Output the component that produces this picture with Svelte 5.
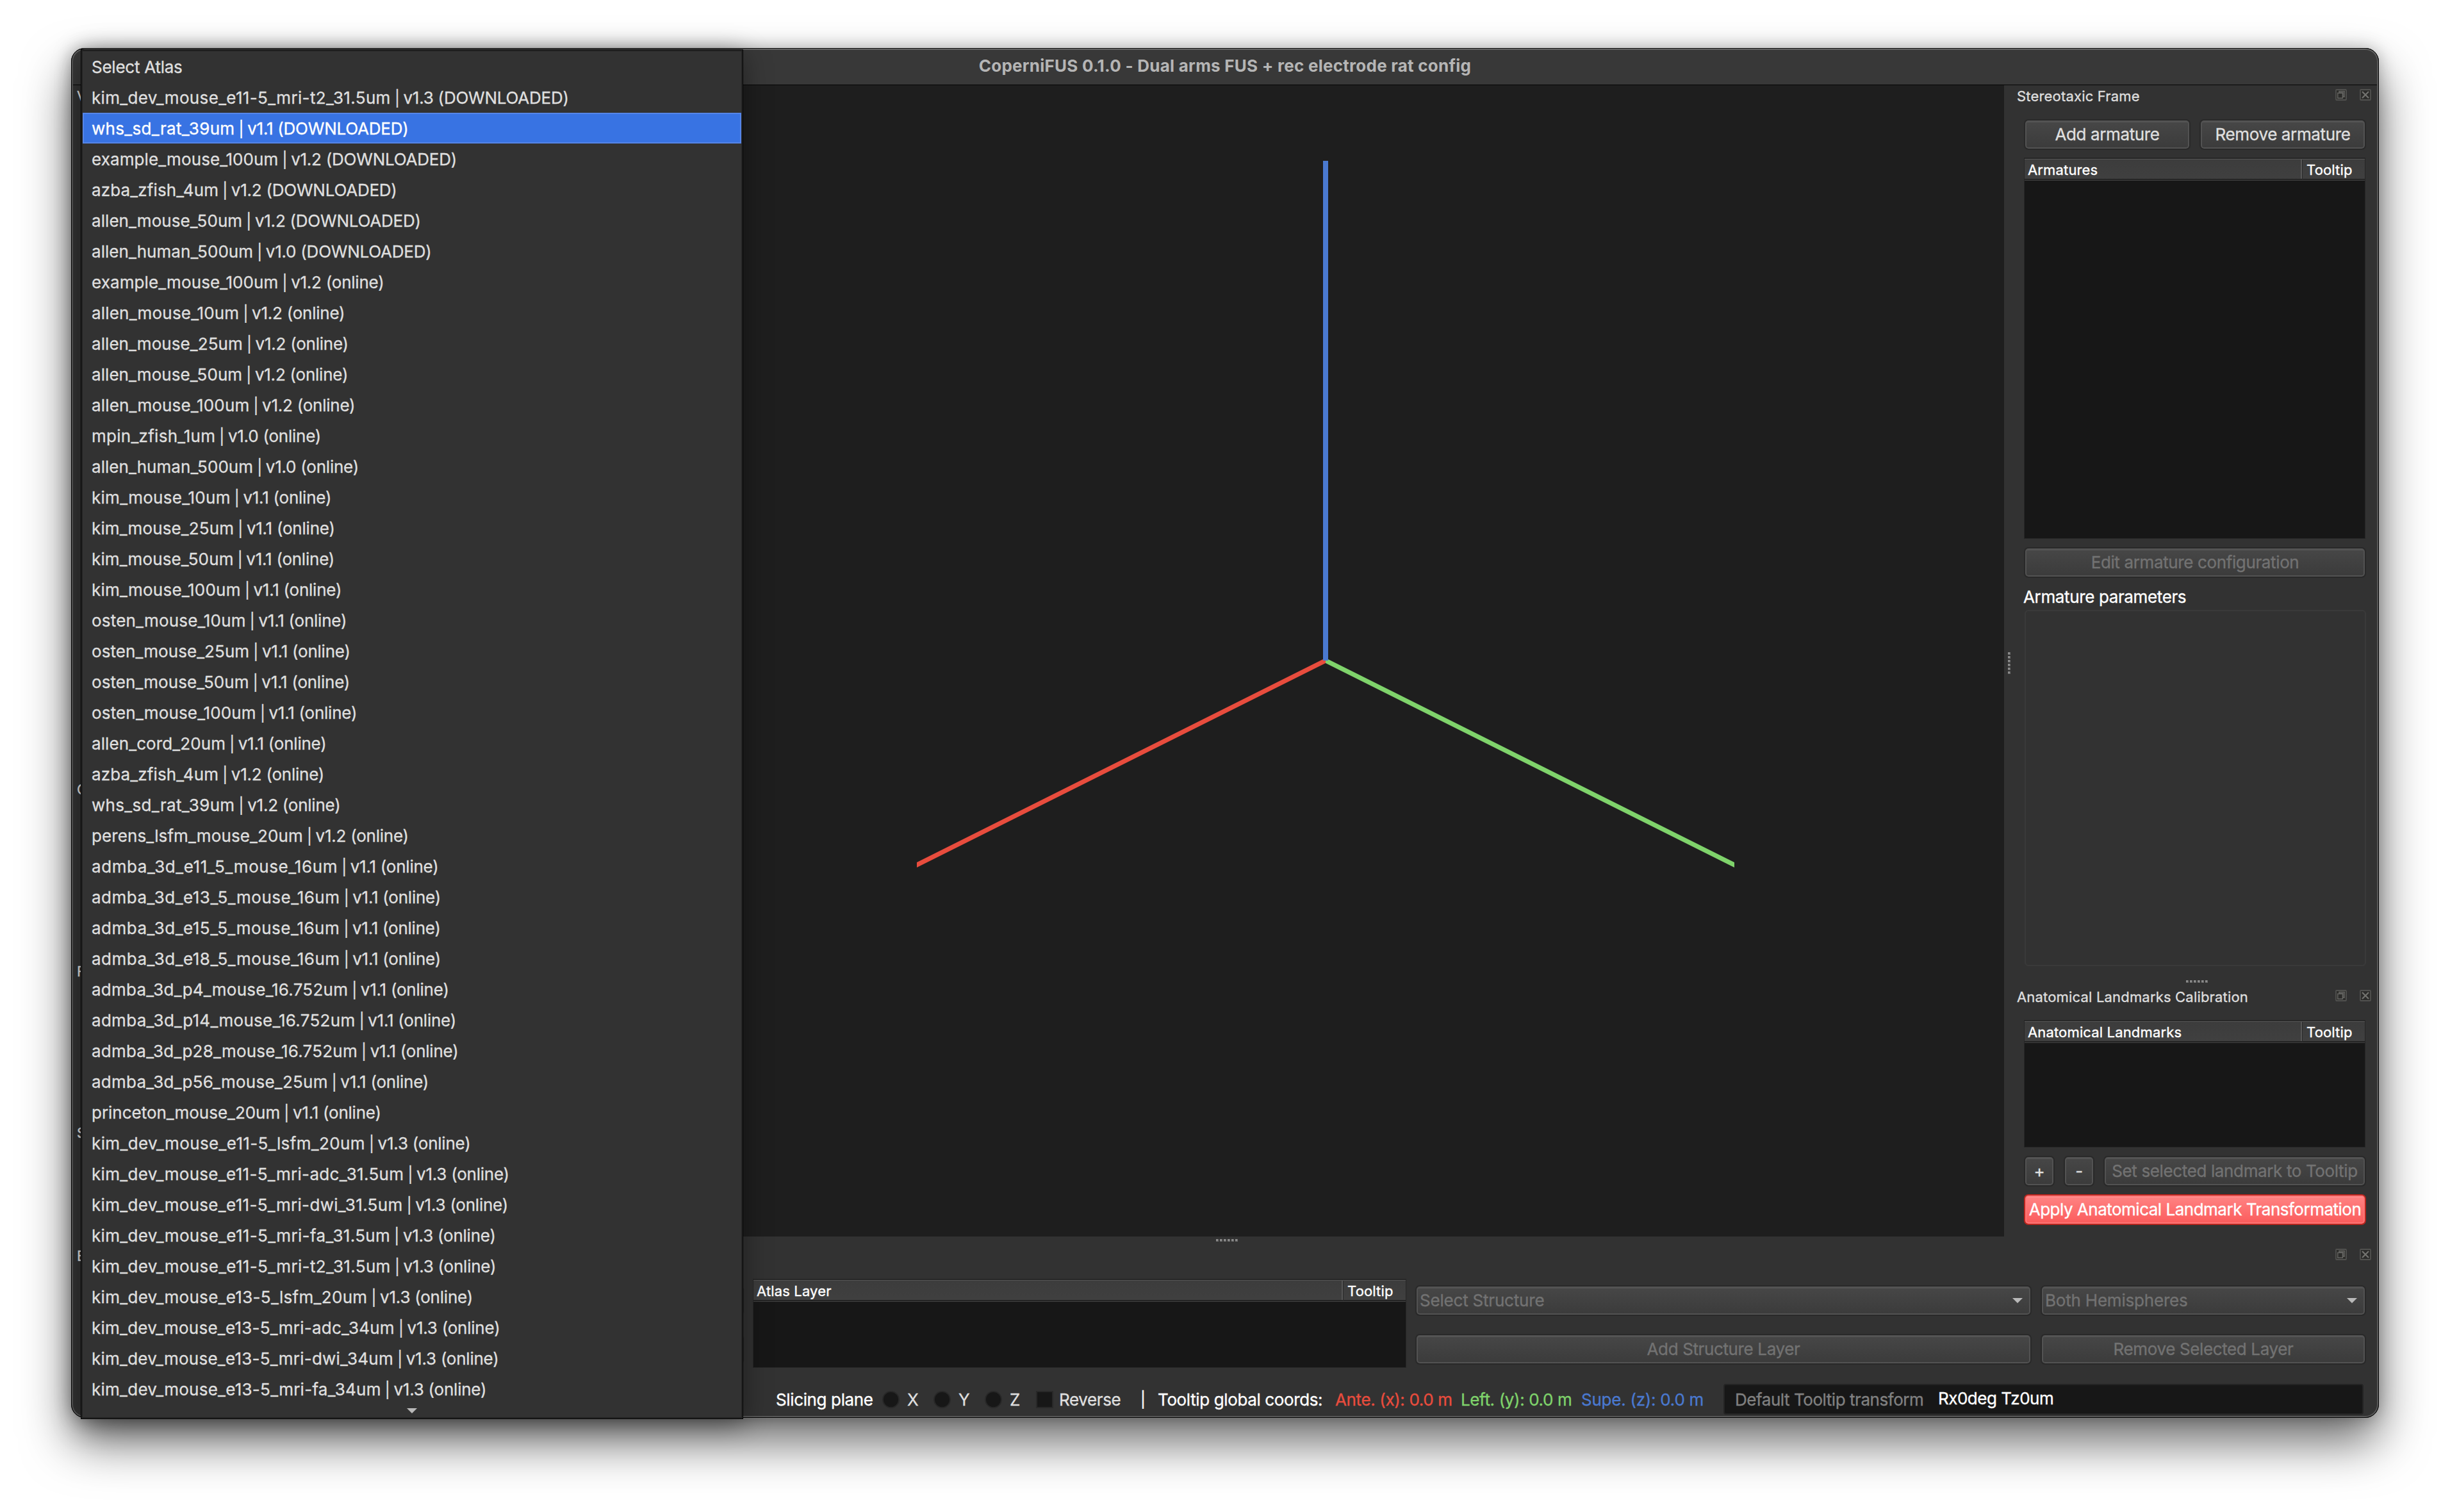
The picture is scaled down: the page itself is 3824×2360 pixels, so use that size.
<script lang="ts">
	const names = [
		'Select Atlas',
		'kim_dev_mouse_e11-5_mri-t2_31.5um | v1.3 (DOWNLOADED)',
		'whs_sd_rat_39um | v1.1 (DOWNLOADED)',
		'example_mouse_100um | v1.2 (DOWNLOADED)',
		'azba_zfish_4um | v1.2 (DOWNLOADED)',
		'allen_mouse_50um | v1.2 (DOWNLOADED)',
		'allen_human_500um | v1.0 (DOWNLOADED)',
		'example_mouse_100um | v1.2 (online)',
		'allen_mouse_10um | v1.2 (online)',
		'allen_mouse_25um | v1.2 (online)',
		'allen_mouse_50um | v1.2 (online)',
		'allen_mouse_100um | v1.2 (online)',
		'mpin_zfish_1um | v1.0 (online)',
		'allen_human_500um | v1.0 (online)',
		'kim_mouse_10um | v1.1 (online)',
		'kim_mouse_25um | v1.1 (online)',
		'kim_mouse_50um | v1.1 (online)',
		'kim_mouse_100um | v1.1 (online)',
		'osten_mouse_10um | v1.1 (online)',
		'osten_mouse_25um | v1.1 (online)',
		'osten_mouse_50um | v1.1 (online)',
		'osten_mouse_100um | v1.1 (online)',
		'allen_cord_20um | v1.1 (online)',
		'azba_zfish_4um | v1.2 (online)',
		'whs_sd_rat_39um | v1.2 (online)',
		'perens_lsfm_mouse_20um | v1.2 (online)',
		'admba_3d_e11_5_mouse_16um | v1.1 (online)',
		'admba_3d_e13_5_mouse_16um | v1.1 (online)',
		'admba_3d_e15_5_mouse_16um | v1.1 (online)',
		'admba_3d_e18_5_mouse_16um | v1.1 (online)',
		'admba_3d_p4_mouse_16.752um | v1.1 (online)',
		'admba_3d_p14_mouse_16.752um | v1.1 (online)',
		'admba_3d_p28_mouse_16.752um | v1.1 (online)',
		'admba_3d_p56_mouse_25um | v1.1 (online)',
		'princeton_mouse_20um | v1.1 (online)',
		'kim_dev_mouse_e11-5_lsfm_20um | v1.3 (online)',
		'kim_dev_mouse_e11-5_mri-adc_31.5um | v1.3 (online)',
		'kim_dev_mouse_e11-5_mri-dwi_31.5um | v1.3 (online)',
		'kim_dev_mouse_e11-5_mri-fa_31.5um | v1.3 (online)',
		'kim_dev_mouse_e11-5_mri-t2_31.5um | v1.3 (online)',
		'kim_dev_mouse_e13-5_lsfm_20um | v1.3 (online)',
		'kim_dev_mouse_e13-5_mri-adc_34um | v1.3 (online)',
		'kim_dev_mouse_e13-5_mri-dwi_34um | v1.3 (online)',
		'kim_dev_mouse_e13-5_mri-fa_34um | v1.3 (online)'
	];

	const count = (text: string, char: string) => text.split(char).length - 1;

	// Inter's underscore and 1 are narrow, so names with many of them get looser tracking
	const atlases = names.map((label) => {
		const [name, version] = label.split(' | ');
		const extra = 3.5 * count(name, '_') + 2 * count(name, '1');
		return { name, version, spacing: (extra / name.length - (version ? 0.37 : 0.25)).toFixed(3) };
	});

	const leftDocks = [
		{ title: 'V', height: 1082 },
		{ title: 'C', height: 284 },
		{ title: 'F', height: 252 },
		{ title: 'S', height: 179 }
	];

	let selected = $state(2);
</script>

{#snippet dockHead(title: string)}
	<div class="dock-head">
		<span class="dock-title">{title}</span>
		<svg class="dock-icon" viewBox="0 0 18 18">
			<rect class="frame" x="1" y="1" width="16" height="16" rx="1" />
			<path d="M6 5.5V3.5H14.2V12H12.5M6 5.5H12.2V13" />
			<path d="M3.8 6.2H11.4V14.2H3.8Z" />
		</svg>
		<svg class="dock-icon" viewBox="0 0 18 18">
			<rect class="frame" x="1" y="1" width="16" height="16" rx="1" />
			<path class="cross" d="M4 4L14 14M14 4L4 14" />
		</svg>
	</div>
{/snippet}

{#snippet tree(title: string)}
	<div class="tree">
		<div class="tree-head">
			<span class="col">{title}</span>
			<span class="col-last">Tooltip</span>
		</div>
	</div>
{/snippet}

{#snippet grip()}
	{#each Array(6) as _}
		<i></i>
	{/each}
{/snippet}

<div class="desktop">
	<div class="window">
		<header class="titlebar">CoperniFUS 0.1.0 - Dual arms FUS + rec electrode rat config</header>

		<main class="workspace">
			<aside class="left">
				{#each leftDocks as dock}
					<section style="height: {dock.height}px">
						<div class="dock-head"><span class="dock-title">{dock.title}</span></div>
					</section>
				{/each}
			</aside>

			<div class="viewport">
				<svg viewBox="1000 133 2128 1797">
					<polygon fill="#e84c3d" points="1431,1346 2069,1027 2069,1035 1431,1354" />
					<polygon fill="#7fd36b" points="2707,1346 2069,1027 2069,1035 2707,1354" />
					<rect fill="#4a79d0" x="2065" y="251" width="8" height="780" />
				</svg>
			</div>

			<aside class="right">
				<div class="grip vertical">{@render grip()}</div>
				<section class="dock stereotaxic">
					{@render dockHead('Stereotaxic Frame')}
					<div class="content">
						<div class="row">
							<button class="wide">Add armature</button>
							<button class="wide">Remove armature</button>
						</div>
						{@render tree('Armatures')}
						<button disabled>Edit armature configuration</button>
						<div class="label">Armature parameters</div>
						<div class="group"></div>
					</div>
				</section>
				<div class="grip">{@render grip()}</div>
				<section class="dock landmarks">
					{@render dockHead('Anatomical Landmarks Calibration')}
					<div class="content">
						{@render tree('Anatomical Landmarks')}
						<div class="row">
							<button class="small">+</button>
							<button class="small">-</button>
							<button class="wide" disabled>Set selected landmark to Tooltip</button>
						</div>
						<button class="apply">Apply Anatomical Landmark Transformation</button>
					</div>
				</section>
			</aside>
		</main>

		<footer class="bottom">
			<div class="grip">{@render grip()}</div>
			{@render dockHead('E')}
			<div class="layers">
				<div class="stack">
					<button></button>
					<button></button>
				</div>
				{@render tree('Atlas Layer')}
				<div class="stack">
					<button class="combo" disabled>Select Structure <span class="arrow"></span></button>
					<button disabled>Add Structure Layer</button>
				</div>
				<div class="stack">
					<button class="combo" disabled>Both Hemispheres <span class="arrow"></span></button>
					<button disabled>Remove Selected Layer</button>
				</div>
			</div>
			<div class="status">
				<span class="slicing">Slicing plane</span>
				{#each ['X', 'Y', 'Z'] as axis}
					<span class="radio"><i></i>{axis}</span>
				{/each}
				<span class="check"><i></i>Reverse</span>
				<span class="bar">|</span>
				<span class="coords">Tooltip global coords:</span>
				<span class="ante">Ante. (x): 0.0 m</span>
				<span class="leftward">Left. (y): 0.0 m</span>
				<span class="supe">Supe. (z): 0.0 m</span>
				<div class="line-edit">
					<span class="hint">Default Tooltip transform</span>
					<span class="value">Rx0deg Tz0um</span>
				</div>
			</div>
		</footer>

		<div class="rim"></div>

		<div class="menu">
			{#each atlases as atlas, i}
				<div class="item" class:selected={i === selected}>
					<span style="letter-spacing: {atlas.spacing}px">{atlas.name}</span
					>{#if atlas.version}<span class="pipe">{' | '}</span><span class="version"
							>{atlas.version}</span
						>{/if}
				</div>
			{/each}
			<div class="more"><span class="arrow"></span></div>
		</div>
	</div>
</div>

<style>
	:global(body) {
		background: #fff;
	}

	.desktop,
	.desktop * {
		box-sizing: border-box;
	}

	.desktop {
		width: 3824px;
		height: 2360px;
		padding: 75px 0 0 111px;
		overflow: hidden;
		background: #fff;
	}

	.window {
		position: relative;
		display: flex;
		flex-direction: column;
		width: 3602px;
		height: 2138px;
		border-radius: 21px;
		background: #323232;
		color: #fff;
		font-family: Inter, 'Liberation Sans', sans-serif;
		font-size: 26px;
		letter-spacing: -0.37px;
		white-space: nowrap;
		-webkit-text-stroke: 0.35px;
		box-shadow:
			0 38px 76px rgba(0, 0, 0, 0.58),
			0 0 26px rgba(0, 0, 0, 0.26);
	}

	.rim {
		position: absolute;
		inset: 0;
		border-radius: 21px;
		border: 1px solid #000;
		box-shadow:
			inset 0 1px 0 #777,
			inset 0 0 0 2px #575757;
		pointer-events: none;
	}

	.titlebar {
		flex: none;
		height: 58px;
		line-height: 55px;
		border-bottom: 1px solid #050505;
		border-radius: 21px 21px 0 0;
		background: #383838;
		color: #b5b5b5;
		font-weight: 700;
		letter-spacing: 0.25px;
		text-align: center;
		-webkit-text-stroke: 0;
	}

	.workspace {
		flex: none;
		display: flex;
		height: 1797px;
	}

	.left {
		width: 889px;
	}

	.viewport {
		width: 2128px;
		background: #1e1e1e;
	}

	.viewport svg {
		display: block;
		width: 100%;
		height: 100%;
	}

	.right {
		position: relative;
		width: 585px;
	}

	.dock-head {
		display: flex;
		align-items: center;
		height: 30px;
		padding: 0 12px 0 20px;
	}

	.left .dock-head,
	.bottom .dock-head {
		padding-left: 9px;
	}

	.dock-title {
		flex: 1;
		position: relative;
		top: 2px;
		color: #dedede;
		font-size: 22px;
		letter-spacing: 0.18px;
	}

	.dock-icon {
		width: 18px;
		height: 18px;
		margin-left: 20px;
		fill: none;
		stroke: #656562;
		stroke-width: 1.4;
	}

	.dock-icon .frame {
		fill: #2c2c2a;
		stroke: #51514f;
		stroke-width: 1.8;
	}

	.dock-icon .cross {
		stroke: #73736f;
		stroke-width: 2.2;
	}

	.content {
		display: flex;
		flex-direction: column;
		padding: 23px 20px 0 31px;
	}

	.row {
		display: flex;
		gap: 14px;
	}

	button {
		display: block;
		height: 48px;
		padding: 0;
		border: 2px solid #292929;
		border-radius: 7px;
		background: linear-gradient(#474747, #3b3b3b);
		box-shadow:
			inset 0 0 0 2px #525252,
			inset 0 3px 0 #575757;
		color: #dfdfdf;
		font: inherit;
		letter-spacing: inherit;
		line-height: 44px;
	}

	button:disabled {
		color: #727272;
	}

	.wide {
		flex: 1;
	}

	.small {
		width: 48px;
	}

	.apply {
		margin-top: 12px;
		border-color: #b9261f;
		background: linear-gradient(#ff8484, #fb5b5b);
		box-shadow:
			inset 0 0 0 2px #ff7676,
			inset 0 3px 0 #ff9494;
		color: #fff;
		letter-spacing: -0.5px;
	}

	.tree {
		border: 1px solid #262626;
		background: #171717;
	}

	.stereotaxic .tree {
		height: 595px;
		margin: 12px 1px 13px 0;
	}

	.landmarks .tree {
		height: 199px;
		margin: 0 1px 13px 0;
	}

	.tree-head {
		display: flex;
		height: 35px;
		padding-top: 1px;
		border-top: 1px solid #2a2a2a;
		border-bottom: 1px solid #404040;
		background: linear-gradient(#3c3c3c, #404040);
		box-shadow:
			inset 0 1px 0 #565656,
			inset 0 -2px 0 #242424;
		font-size: 22px;
		letter-spacing: 0.15px;
		line-height: 33px;
	}

	.col {
		flex: 1;
		height: 30px;
		padding-left: 5px;
		border-right: 2px solid #565656;
	}

	.col-last {
		width: 98px;
		padding-left: 6px;
		border-left: 1px solid #292929;
	}

	.label {
		height: 50px;
		margin-left: -1px;
		line-height: 60px;
	}

	.group {
		height: 556px;
		margin-left: 1px;
		border: 2px solid #3a3a3a;
		border-radius: 6px;
	}

	.grip {
		display: flex;
		justify-content: center;
		gap: 2px;
		height: 4px;
	}

	.grip i {
		width: 4px;
		height: 4px;
		border: solid #6a6a6a;
		border-width: 0 1px 1px 0;
		background: #8a8a8a;
	}

	.right .grip {
		margin: 22px 0 5px;
		padding-left: 17px;
	}

	.right .vertical {
		position: absolute;
		left: 6px;
		top: 885px;
		flex-direction: column;
		height: auto;
		margin: 0;
		padding: 0;
	}

	.bottom {
		flex: 1;
	}

	.bottom .grip {
		margin: 4px 0 5px;
		padding-left: 6px;
	}

	.layers {
		display: grid;
		grid-template-columns: 1031px 1020px 962px 508px;
		gap: 14px;
		padding: 23px 0 0 19px;
	}

	.layers .tree {
		height: 139px;
	}

	.stack {
		display: flex;
		flex-direction: column;
		gap: 28px;
		padding-top: 10px;
	}

	.combo {
		display: flex;
		align-items: center;
		justify-content: space-between;
		padding: 0 12px 0 5px;
		letter-spacing: -0.2px;
	}

	.arrow {
		width: 16px;
		height: 8px;
		background: #b9b9b9;
		clip-path: polygon(0 0, 100% 0, 50% 100%);
	}

	.status {
		display: flex;
		align-items: center;
		height: 48px;
		margin-top: 25px;
		padding-left: 1100px;
	}

	.status > span {
		flex: none;
	}

	.slicing {
		width: 166px;
	}

	.radio,
	.check {
		display: flex;
		align-items: center;
		gap: 12px;
		width: 80px;
		color: #dfdfdf;
	}

	.radio i,
	.check i {
		width: 27px;
		height: 27px;
		border: 2px solid #282828;
		background: #171717;
	}

	.radio i {
		border-radius: 50%;
	}

	.check {
		gap: 9px;
		width: 163px;
	}

	.bar {
		width: 27px;
		font-size: 24px;
	}

	.coords {
		width: 277px;
	}

	.ante {
		width: 196px;
		color: #e84c3d;
	}

	.leftward {
		width: 188px;
		color: #7fd36b;
	}

	.supe {
		width: 222px;
		color: #4a79d0;
		letter-spacing: -0.25px;
	}

	.line-edit {
		display: flex;
		align-items: center;
		width: 999px;
		height: 48px;
		padding-left: 16px;
		border: 2px solid #242424;
		border-radius: 4px;
		background: #171717;
	}

	.hint {
		width: 317px;
		color: #808080;
		letter-spacing: -0.45px;
	}

	.value {
		margin-top: -3px;
		letter-spacing: -0.5px;
	}

	.menu {
		position: absolute;
		left: 15px;
		top: 2px;
		width: 1034px;
		height: 2138px;
		border: 1px solid #050505;
		padding: 2px;
		background: #323232;
		box-shadow:
			inset 0 0 0 2px #232323,
			0 8px 40px rgba(0, 0, 0, 0.4);
	}

	.item {
		height: 48px;
		padding-left: 14px;
		color: #dfdfdf;
		line-height: 49px;
	}

	.item.selected {
		background: #3873e3;
		box-shadow: inset 0 0 0 2px #5585e8;
		color: #fff;
	}

	.pipe {
		font-size: 24px;
		letter-spacing: -0.6px;
		white-space: pre;
	}

	.version {
		letter-spacing: -0.23px;
	}

	.more {
		display: flex;
		justify-content: center;
		padding-top: 6px;
	}
</style>
